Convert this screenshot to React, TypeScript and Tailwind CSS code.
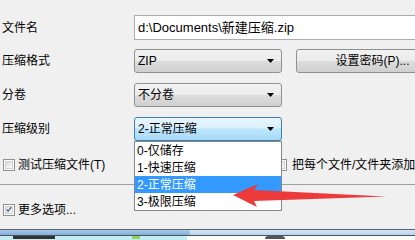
import React from "react";

const FONT = { fontFamily: '"Liberation Sans", "Noto Sans CJK SC", sans-serif' };

const LEVELS = ["0-仅储存", "1-快速压缩", "2-正常压缩", "3-极限压缩"];

function Arrow() {
  return (
    <svg width="7" height="4" viewBox="0 0 7 4" className="shrink-0">
      <path d="M0 0h7L3.5 4z" fill="#000" />
    </svg>
  );
}

function Combo({ value, open }: { value: string; open?: boolean }) {
  return (
    <div
      className={`flex h-full w-[148px] shrink-0 items-center justify-between rounded-[3px] border pl-[3px] pr-[7px] ${
        open
          ? "border-[#3c7fb1] bg-[linear-gradient(#eaf6fd_0%,#d9f0fc_45%,#bee6fd_50%,#a7d9f5_100%)]"
          : "border-[#8e8f8f] bg-[linear-gradient(#f2f2f2_0%,#ebebeb_50%,#dddddd_50%,#cfcfcf_100%)]"
      }`}
    >
      <span>{value}</span>
      <Arrow />
    </div>
  );
}

function Check({ checked }: { checked?: boolean }) {
  return (
    <span className="flex h-[12px] w-[12px] shrink-0 items-center justify-center border border-[#8e8f8f] bg-white">
      <span className="flex h-[8px] w-[8px] items-center justify-center border border-[#d0d0d0] bg-[linear-gradient(135deg,#dcdcdc,#fbfbfb)]">
        {checked && (
          <svg width="9" height="9" viewBox="0 0 9 9" className="-mt-[1px]">
            <path d="M1 4.5l2.2 2.8L8 1" fill="none" stroke="#3c5a9a" strokeWidth="1.8" />
          </svg>
        )}
      </span>
    </span>
  );
}

export default function App() {
  return (
    <div className="relative flex h-[240px] w-[415px] flex-col overflow-hidden bg-[#f0f0f0] text-[12px] text-black" style={FONT}>
      <div className="flex flex-col pt-[15px]">
        {/* file name */}
        <div className="flex h-[25px] items-center pl-[2px]">
          <span className="w-[132px] shrink-0">文件名</span>
          <div className="flex h-full w-[320px] shrink-0 items-center border border-[#abadb3] bg-white pl-[3px] text-[13px]">
            d:\Documents\新建压缩.zip
          </div>
        </div>

        {/* format + password */}
        <div className="mt-[9px] flex h-[24px] items-center pl-[2px]">
          <span className="w-[132px] shrink-0">压缩格式</span>
          <Combo value="ZIP" />
          <div className="ml-[14px] flex h-full w-[153px] shrink-0 items-center justify-center rounded-[3px] border border-[#8e8f8f] bg-[linear-gradient(#f2f2f2_0%,#ebebeb_50%,#dddddd_50%,#cfcfcf_100%)]">
            设置密码(P)...
          </div>
        </div>

        {/* volumes */}
        <div className="mt-[10px] flex h-[24px] items-center pl-[2px]">
          <span className="w-[132px] shrink-0">分卷</span>
          <Combo value="不分卷" />
        </div>

        {/* level */}
        <div className="mt-[10px] flex h-[24px] items-center pl-[2px]">
          <span className="w-[132px] shrink-0">压缩级别</span>
          <div className="relative h-full">
            <Combo value="2-正常压缩" open />
            <ul className="absolute left-0 top-[24px] z-10 w-[148px] border border-[#828790] bg-white py-0">
              {LEVELS.map((l, i) => (
                <li
                  key={l}
                  className={`flex h-[17px] items-center pl-[2px] ${i === 2 ? "bg-[#3399ff] text-white" : ""}`}
                >
                  {l}
                </li>
              ))}
            </ul>
          </div>
        </div>

        {/* options */}
        <div className="mt-[17px] flex h-[13px] items-center">
          <div className="flex w-[275px] shrink-0 items-center pl-[3px]">
            <Check />
            <span className="ml-[3px]">测试压缩文件(T)</span>
          </div>
          <Check />
          <span className="ml-[5px] whitespace-nowrap">把每个文件/文件夹添加到</span>
        </div>

        <div className="mt-[13px] h-px w-full bg-[#a0a0a0]" />

        <div className="mt-[18px] flex h-[13px] items-center pl-[3px]">
          <Check checked />
          <span className="ml-[3px]">更多选项...</span>
        </div>
      </div>

      {/* window edge below */}
      <div className="mt-auto flex h-[11px] flex-col">
        <div className="h-px bg-[#5a6470]" />
        <div className="flex h-[5px]">
          <div className="w-[190px] bg-[linear-gradient(#a9c9e6,#7fb0db)]" />
          <div className="flex-1 bg-[linear-gradient(#d6e6f5,#bcd4ec)]" />
        </div>
        <div className="h-px bg-[#4b5561]" />
        <div className="flex flex-1">
          <div className="relative w-[187px] bg-[#c6ecf3]">
            <span className="absolute left-[13px] top-0 h-[3px] w-[42px] bg-[#333]" />
            <span className="absolute left-[132px] top-0 h-[3px] w-[8px] bg-[#8fd35a]" />
          </div>
          <div className="relative flex-1 bg-white">
            <span className="absolute left-[78px] top-0 h-[3px] w-[20px] rounded-t bg-[#555]" />
          </div>
        </div>
      </div>

      {/* red annotation arrow */}
      <svg className="absolute left-0 top-0 z-20" width="415" height="240" viewBox="0 0 415 240">
        <polygon points="233,195 258,184 254,190 386,196.5 254,201 257,207" fill="#ec3a3a" />
      </svg>
    </div>
  );
}
